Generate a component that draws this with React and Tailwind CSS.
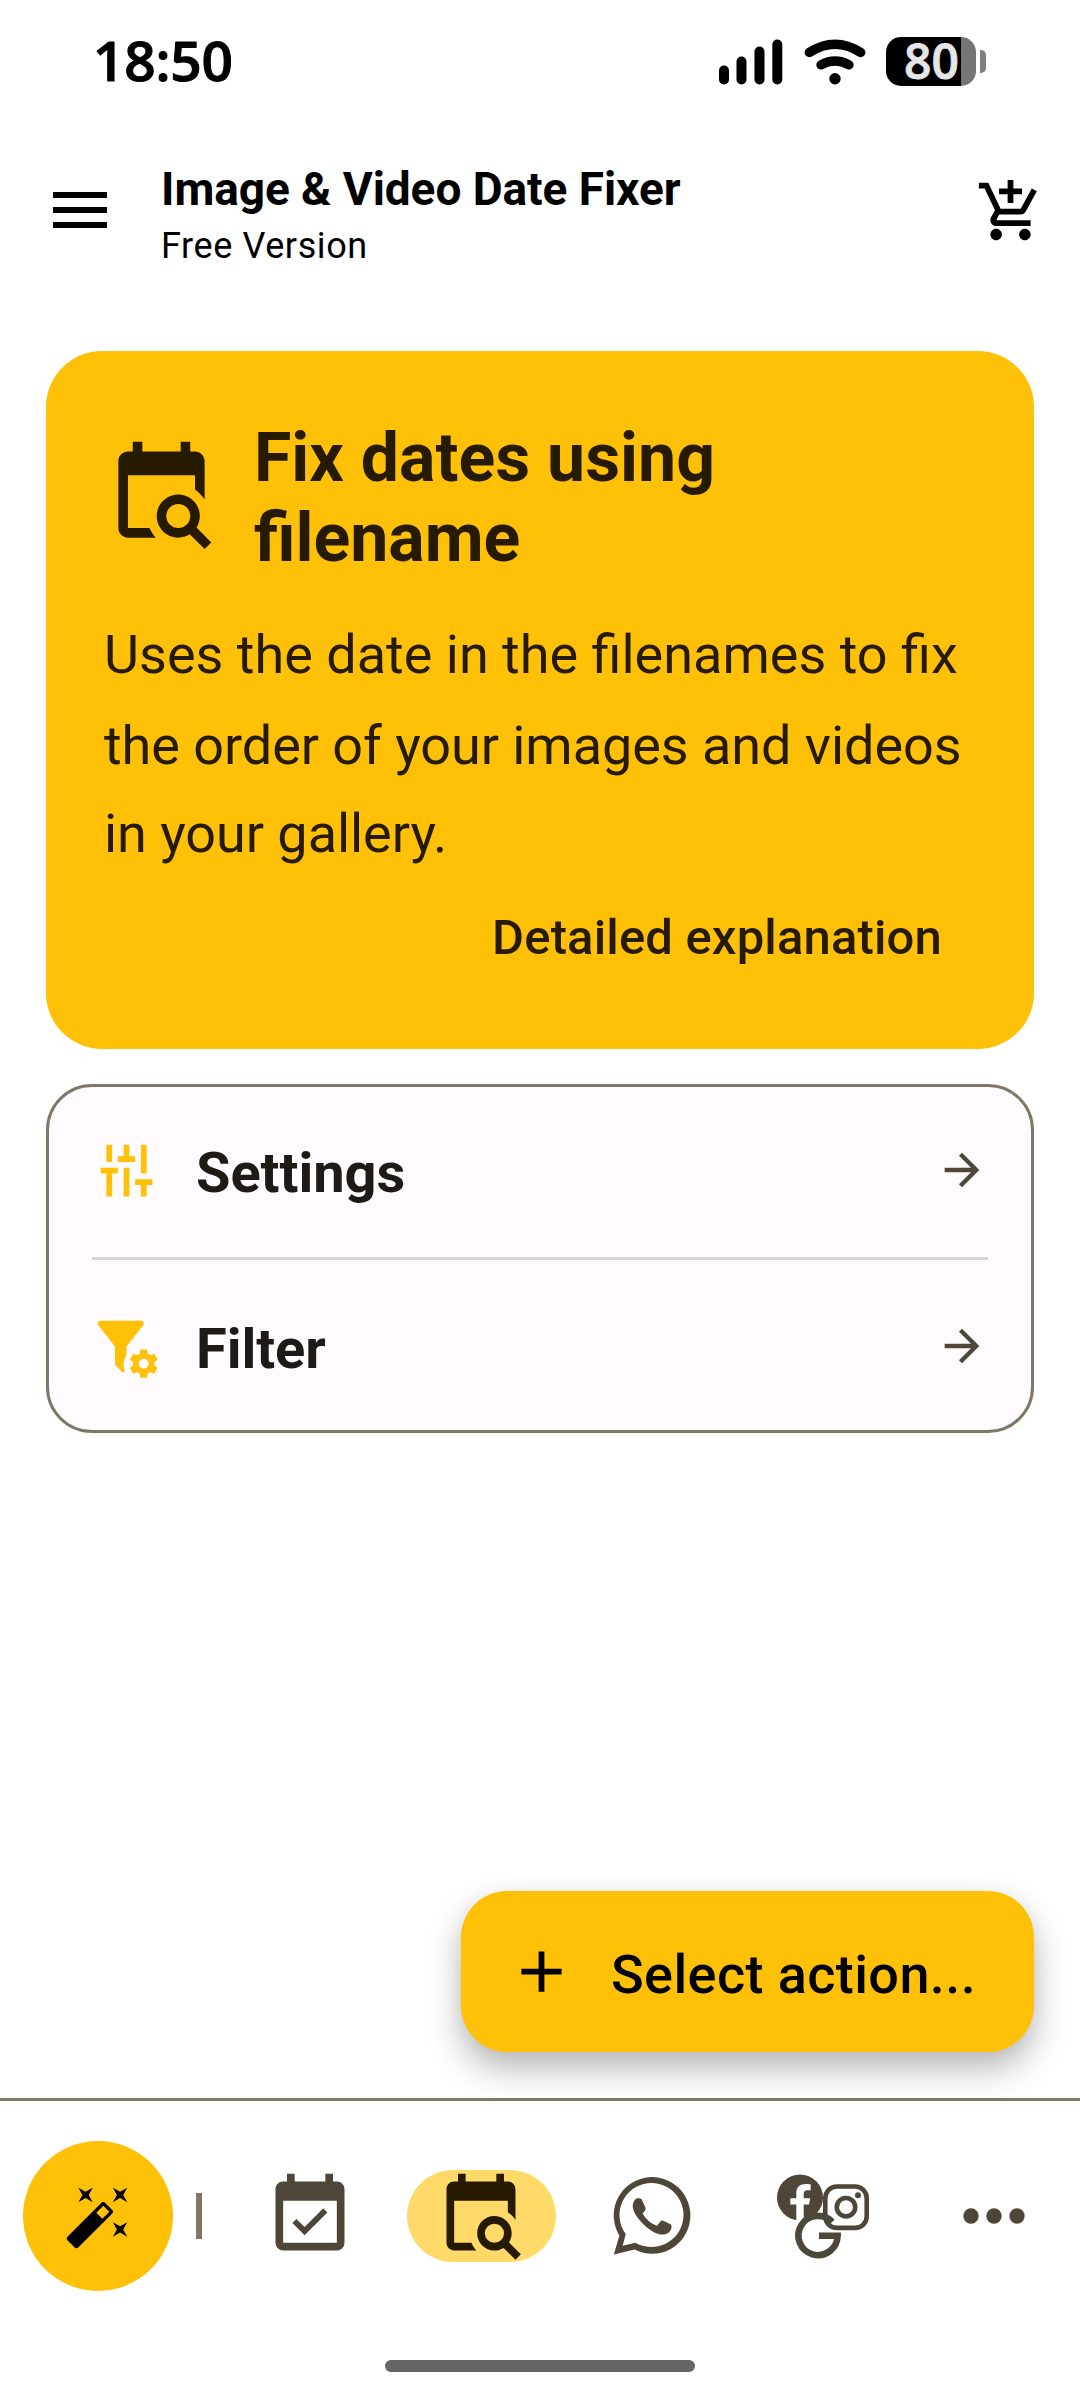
import {
  MdMenu,
  MdAddShoppingCart,
  MdArrowForward,
  MdAdd,
  MdAutoFixHigh,
} from "react-icons/md";

const CalendarSearch = ({ className }) => (
  <svg viewBox="0 0 24 24" fill="currentColor" className={className}>
    <path d="M15.5,12C18,12 20,14 20,16.5C20,17.38 19.75,18.21 19.31,18.9L22.39,22L21,23.39L17.88,20.32C17.19,20.75 16.37,21 15.5,21C13,21 11,19 11,16.5C11,14 13,12 15.5,12M15.5,14A2.5,2.5 0 0,0 13,16.5A2.5,2.5 0 0,0 15.5,19A2.5,2.5 0 0,0 18,16.5A2.5,2.5 0 0,0 15.5,14M19,8H5V19H9.5C9.81,19.75 10.26,20.42 10.81,21H5C3.89,21 3,20.1 3,19V5C3,3.89 3.89,3 5,3H6V1H8V3H16V1H18V3H19A2,2 0 0,1 21,5V13.03C20.5,12.22 19.8,11.54 19,11V8Z" />
  </svg>
);

const CalendarCheck = ({ className }) => (
  <svg viewBox="0 0 24 24" fill="currentColor" className={className}>
    <path d="M19,19H5V8H19M16,1V3H8V1H6V3H5C3.89,3 3,3.89 3,5V19A2,2 0 0,0 5,21H19A2,2 0 0,0 21,19V5C21,3.89 20.1,3 19,3H18V1M16.53,11.06L15.47,10L10.59,14.88L8.47,12.76L7.41,13.82L10.59,17L16.53,11.06Z" />
  </svg>
);

const TuneVertical = ({ className }) => (
  <svg viewBox="0 0 24 24" fill="currentColor" className={className}>
    <path d="M5 3h2v6H5zM3 11h6v2H7v8H5v-8H3zM11 3h2v4h2v2H9V7h2zM11 11h2v10h-2zM17 3h2v10h-2zM15 15h6v2h-2v4h-2v-4h-2z" />
  </svg>
);

const FilterCog = ({ className }) => (
  <svg viewBox="0 0 24 24" fill="currentColor" className={className}>
    <path d="M12,12V14.9C11.37,15.9 11,17.1 11,18.4C11,19.2 11.15,20 11.4,20.75C11,21.1 10.6,21 10.3,20.71L8.29,18.7C8.06,18.47 7.96,18.16 8,17.87V12H7.97L2.21,4.62C1.87,4.19 1.95,3.56 2.38,3.22C2.57,3.08 2.78,3 3,3H17C17.22,3 17.43,3.08 17.62,3.22C18.05,3.56 18.13,4.19 17.79,4.62L12.03,12H12Z" />
    <path
      transform="translate(12.1 12.1) scale(0.49)"
      d="M12,15.5A3.5,3.5 0 0,1 8.5,12A3.5,3.5 0 0,1 12,8.5A3.5,3.5 0 0,1 15.5,12A3.5,3.5 0 0,1 12,15.5M19.43,12.97C19.47,12.65 19.5,12.33 19.5,12C19.5,11.67 19.47,11.34 19.43,11L21.54,9.37C21.73,9.22 21.78,8.95 21.66,8.73L19.66,5.27C19.54,5.05 19.27,4.96 19.05,5.05L16.56,6.05C16.04,5.66 15.5,5.32 14.87,5.07L14.5,2.42C14.46,2.18 14.25,2 14,2H10C9.75,2 9.54,2.18 9.5,2.42L9.13,5.07C8.5,5.32 7.96,5.66 7.44,6.05L4.95,5.05C4.73,4.96 4.46,5.05 4.34,5.27L2.34,8.73C2.21,8.95 2.27,9.22 2.46,9.37L4.57,11C4.53,11.34 4.5,11.67 4.5,12C4.5,12.33 4.53,12.65 4.57,12.97L2.46,14.63C2.27,14.78 2.21,15.05 2.34,15.27L4.34,18.73C4.46,18.95 4.73,19.03 4.95,18.95L7.44,17.94C7.96,18.34 8.5,18.68 9.13,18.93L9.5,21.58C9.54,21.82 9.75,22 10,22H14C14.25,22 14.46,21.82 14.5,21.58L14.87,18.93C15.5,18.67 16.04,18.34 16.56,17.94L19.05,18.95C19.27,19.03 19.54,18.95 19.66,18.73L21.66,15.27C21.78,15.05 21.73,14.78 21.54,14.63L19.43,12.97Z"
    />
  </svg>
);

const WhatsApp = ({ className }) => (
  <svg viewBox="0 0 24 24" fill="currentColor" className={className}>
    <path
      fillRule="evenodd"
      d="M2.05 22.05L3.5 17.1A10 10 0 1 1 7.45 20.75ZM4.35 19.75L7.65 18.95A8.35 8.35 0 1 0 5.15 16.7Z"
    />
    <path d="M8.05 7.4C8.4 7.3 8.9 7.3 9.25 7.55C9.6 8.2 9.95 9.1 10.35 9.95C10.4 10.4 9.9 10.9 9.55 11.35C10.4 12.8 11.7 14 13.3 14.55L14.3 13.3C14.5 13.15 14.7 13.15 14.9 13.25L16.85 14.15C17.3 14.5 17.1 15.5 16.6 16.1C16 16.7 15.1 16.95 14.2 16.8C12.8 16.6 11.1 15.5 9.9 14.3C8.5 12.9 7.2 11.3 7 9.8C6.9 8.8 7.3 7.8 8.05 7.4Z" />
  </svg>
);

const Socials = ({ className }) => (
  <svg viewBox="0 0 92 92" fill="none" className={className}>
    {/* facebook */}
    <circle cx="23" cy="27.5" r="23" fill="currentColor" />
    <path
      fill="#fff"
      d="M19.3 51V34.5H13.3V28.2H19.3V23C19.3 17 23 14 29 14C31 14 33.7 14.4 33.7 14.4V20.2H30.5C27.5 20.2 26.7 22 26.7 24V28.2H33.2L32 34.5H26.7V51Z"
    />
    <circle cx="41" cy="65.5" r="18" fill="#fff" />
    {/* instagram */}
    <g stroke="currentColor" strokeWidth="4.6">
      <rect x="48.3" y="16.5" width="41.4" height="41.4" rx="11.5" />
      <circle cx="69" cy="37.2" r="9.2" />
    </g>
    <circle cx="81" cy="25.2" r="3" fill="currentColor" />
    {/* google */}
    <path
      stroke="currentColor"
      strokeWidth="6.6"
      d="M55.2 52A19.6 19.6 0 1 0 60.6 65.8H42"
    />
  </svg>
);

const Dots = ({ className }) => (
  <svg viewBox="0 0 24 24" fill="currentColor" className={className}>
    <circle cx="6" cy="12" r="2" />
    <circle cx="12" cy="12" r="2" />
    <circle cx="18" cy="12" r="2" />
  </svg>
);

const tabs = [
  { id: "date", Icon: CalendarCheck },
  { id: "filename", Icon: CalendarSearch, active: true },
  { id: "whatsapp", Icon: WhatsApp },
  { id: "socials", Icon: Socials },
  { id: "more", Icon: Dots },
];

function StatusBar() {
  return (
    <div className="flex h-[123px] shrink-0 items-center justify-between pl-[93px] pr-[94px]">
      <span className="pb-[5px] font-['Open_Sans'] text-[55px] font-semibold leading-none tracking-[-0.2px] [-webkit-text-stroke:1px_#000]">
        18:50
      </span>
      <div className="flex items-center">
        <svg viewBox="0 0 64 46" className="h-[46px] w-[64px]">
          <rect x="0" y="26.5" width="10" height="19" rx="5" />
          <rect x="17.5" y="17.5" width="10" height="28" rx="5" />
          <rect x="35.5" y="7.5" width="10" height="38" rx="5" />
          <rect x="53.3" y="0.5" width="10" height="45" rx="5" />
        </svg>
        <svg
          viewBox="0 0 62 46"
          fill="none"
          stroke="#000"
          strokeWidth="9.4"
          strokeLinecap="round"
          className="ml-[21px] h-[46px] w-[62px]"
        >
          <path d="M5.3 13.5Q31 -3 56.7 13.5" />
          <path d="M17 25.8Q31 18.4 45 25.8" />
          <circle cx="31" cy="39.8" r="5.7" fill="#000" stroke="none" />
        </svg>
        <div className="ml-5 flex h-[49px] w-[90px] items-center justify-center rounded-[15px] bg-[linear-gradient(to_right,#000_75px,#757575_75px)]">
          <span className="pb-px pl-px font-['Open_Sans'] text-[48px] font-semibold leading-[48px] text-[#e6e6e6] [-webkit-text-stroke:0.8px_#e6e6e6]">
            80
          </span>
        </div>
        <div className="ml-1 h-[23px] w-[6px] rounded-r-[5px] bg-[#808080]" />
      </div>
    </div>
  );
}

function AppBar() {
  return (
    <header className="flex h-[175px] shrink-0 items-start pl-[44px] pr-[35px]">
      <MdMenu className="mt-[51px] size-[72px]" />
      <div className="ml-[45px] mt-[38px] flex-1">
        <h1 className="text-[46px] font-bold leading-[56px] tracking-[-0.06px]">
          Image &amp; Video Date Fixer
        </h1>
        <p className="text-[36px] leading-[58px] tracking-[0.6px]">
          Free Version
        </p>
      </div>
      <MdAddShoppingCart className="mt-[54px] size-[69px]" />
    </header>
  );
}

function SettingsRow({ Icon, label }) {
  return (
    <>
      <Icon className="size-[69px] text-[#ffc107]" />
      <span className="ml-[35px] flex-1 pt-[5px] text-[56px] font-bold tracking-[-0.05px] text-[#1e1b16]">
        {label}
      </span>
      <MdArrowForward className="mb-px size-[52px] text-[#4d4639]" />
    </>
  );
}

export default function App() {
  return (
    <div className="flex h-[2400px] w-[1080px] flex-col overflow-hidden bg-white font-['Roboto',sans-serif] text-black">
      <StatusBar />
      <AppBar />

      <main className="flex flex-1 flex-col px-[46px] pt-[53px]">
        <section className="h-[698px] rounded-[56px] bg-[#ffc107] px-[58px] pt-[59px] text-[#261a00] [font-feature-settings:'liga'_1]">
          <div className="flex items-center">
            <CalendarSearch className="size-[115px] shrink-0" />
            <h2 className="ml-[35px] pt-2 text-[68px] font-bold leading-[80px]">
              Fix dates using
              <br />
              filename
            </h2>
          </div>
          <p className="mt-[33px] whitespace-nowrap text-[54px] leading-[88px] tracking-[-0.05px]">
            <span className="block pb-[3px] tracking-normal">
              Uses the date in the filenames to fix
            </span>
            the order of your images and videos
            <br />
            in your gallery.
          </p>
          <div className="mt-7 flex justify-end pr-[34px]">
            <button className="text-[49px] font-medium leading-[64px] tracking-[0.15px]">
              Detailed explanation
            </button>
          </div>
        </section>

        <section className="mt-[35px] h-[349px] rounded-[46px] border-[3px] border-[#827767] bg-[#fffbff]">
          <div className="flex h-[167px] items-center px-[43px]">
            <SettingsRow Icon={TuneVertical} label="Settings" />
          </div>
          <div className="mx-[43px] mt-[3px] h-[3px] bg-[#d8d4d0]" />
          <div className="flex h-[173px] items-center px-[43px]">
            <SettingsRow Icon={FilterCog} label="Filter" />
          </div>
        </section>

        <button className="mb-[46px] ml-auto mt-auto flex h-[161px] w-[573px] items-center rounded-[46px] bg-[#ffc107] pl-[46px] shadow-[0_17px_34px_rgba(0,0,0,0.28),0_0_20px_rgba(0,0,0,0.04)]">
          <MdAdd className="size-[69px]" />
          <span className="ml-[35px] pt-[6px] text-[54px] font-medium tracking-[0.4px]">
            Select action...
          </span>
        </button>
      </main>

      <footer className="relative h-[302px] shrink-0 border-t-[3px] border-[#827767] bg-white">
        <nav className="flex h-[230px] items-center pl-[23px]">
          <button className="flex size-[150px] items-center justify-center rounded-full bg-[#ffc107]">
            <MdAutoFixHigh className="size-[69px]" />
          </button>
          <div className="ml-[23px] mr-[22px] h-[46px] w-[6px] bg-[#827767]" />
          {tabs.map(({ id, Icon, active }) => (
            <div key={id} className="flex w-[171px] shrink-0 justify-center">
              <div
                className={
                  active
                    ? "ml-px flex h-[92px] w-[149px] justify-center rounded-full bg-[#ffda68] text-[#261a00]"
                    : "flex h-[92px] w-[149px] justify-center text-[#4d4639]"
                }
              >
                <Icon className="size-[92px]" />
              </div>
            </div>
          ))}
        </nav>
        <div className="mx-auto mt-[29px] h-[12px] w-[310px] rounded-full bg-[#666]" />
      </footer>
    </div>
  );
}
